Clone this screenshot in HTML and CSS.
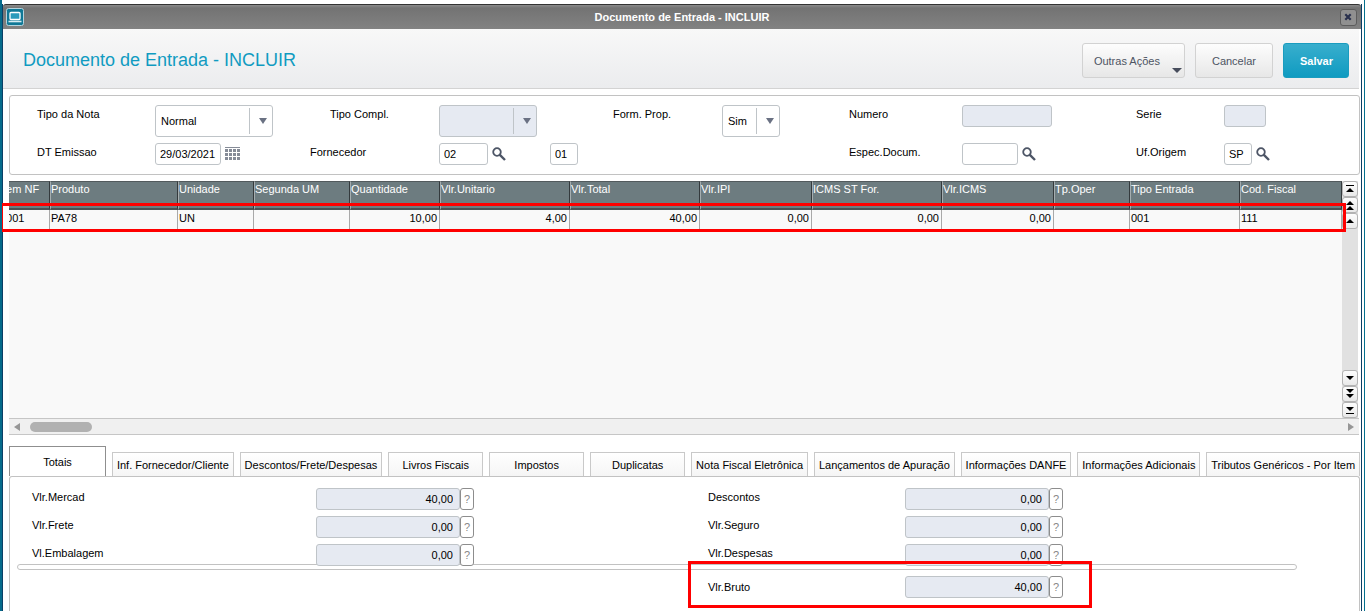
FILE: index.html
```html
<!DOCTYPE html>
<html lang="pt-BR">
<head>
<meta charset="UTF-8" />
<title>Documento de Entrada - INCLUIR</title>
    <link rel="stylesheet" href="styles.css">
</head>
<body>

<svg width="0" height="0" class="symbols">
    <symbol id="lupa" viewBox="0 0 14 14">
        <circle cx="5" cy="5" r="3.8" fill="none" stroke="#4d5566" stroke-width="1.8" />
        <path d="M7.6 7.6L13 13" stroke="#4d5566" stroke-width="2.4" />
    </symbol>
</svg>

<div class="window">
    <div class="titlebar">
        <svg class="app-icon" width="18" height="18" viewBox="0 0 18 18">
            <rect x=".5" y=".5" width="17" height="17" rx="2" fill="#107896" stroke="#b5d4de" />
            <rect x="4" y="4.5" width="10" height="7" rx="1" fill="#2c9bbb" stroke="#fff" stroke-width="1.3" />
            <path d="M2.500 13.500h13" stroke="#d9edf3" stroke-width="1.6" />
        </svg>
        <span class="titlebar-text">Documento de Entrada - INCLUIR</span>
        <button class="close" aria-label="Fechar">
            <svg width="8" height="8" viewBox="0 0 8 8"><path d="M1.300 1.300L6.700 6.700M6.700 1.300L1.300 6.700" stroke="#29304d" stroke-width="2.2" /></svg>
        </button>
    </div>

    <div class="header">
        <h1>Documento de Entrada - INCLUIR</h1>
        <div class="actions">
            <button class="btn btn-menu">Outras Ações</button>
            <button class="btn">Cancelar</button>
            <button class="btn btn-primary">Salvar</button>
        </div>
    </div>

    <div class="content">
        <form class="box">
            <label for="tipo">Tipo da Nota</label>
            <div class="select w-tipo"><select id="tipo"><option>Normal</option></select></div>
            <label for="compl" class="shift">Tipo Compl.</label>
            <div class="select disabled w-compl"><select id="compl" disabled><option></option></select></div>
            <label for="form">Form. Prop.</label>
            <div class="select w-form"><select id="form"><option>Sim</option></select></div>
            <label for="numero">Numero</label>
            <div><input id="numero" class="w-numero" type="text" disabled /></div>
            <label for="serie">Serie</label>
            <div><input id="serie" class="w-serie" type="text" disabled /></div>

            <label for="emissao">DT Emissao</label>
            <div class="group">
                <input id="emissao" class="w-data" type="text" value="29/03/2021" />
                <button type="button" class="icon" aria-label="Calendario">
                    <svg width="16" height="14" viewBox="0 0 16 14">
                        <path d="M0 .5h15" stroke="#858b97" />
                        <path d="M0 3.500h15M0 7.500h15M0 11.500h15" stroke="#858b97" stroke-width="3" stroke-dasharray="3 1" />
                    </svg>
                </button>
            </div>
            <label for="fornecedor">Fornecedor</label>
            <div class="group">
                <input id="fornecedor" class="w-forn" type="text" value="02" />
                <button type="button" class="icon" aria-label="Pesquisar fornecedor"><svg width="14" height="14"><use href="#lupa" /></svg></button>
                <input class="w-loja" type="text" value="01" aria-label="Loja" />
            </div>
            <span></span>
            <span></span>
            <label for="espec">Espec.Docum.</label>
            <div class="group">
                <input id="espec" class="w-espec" type="text" />
                <button type="button" class="icon" aria-label="Pesquisar especie"><svg width="14" height="14"><use href="#lupa" /></svg></button>
            </div>
            <label for="uf">Uf.Origem</label>
            <div class="group">
                <input id="uf" class="w-loja" type="text" value="SP" />
                <button type="button" class="icon" aria-label="Pesquisar UF"><svg width="14" height="14"><use href="#lupa" /></svg></button>
            </div>
        </form>

        <div class="grid">
            <div class="grid-view">
                <table>
                    <colgroup>
                        <col class="c-item" /><col class="c-prod" /><col class="c-uni" /><col class="c-seg" />
                        <col class="c-qtd" /><col class="c-valor" /><col class="c-valor" /><col class="c-imp" />
                        <col class="c-valor" /><col class="c-imp" /><col class="c-uni" /><col class="c-tes" /><col class="c-cfop" />
                    </colgroup>
                    <thead>
                        <tr>
                        <th>Item NF</th>
                        <th>Produto</th>
                        <th>Unidade</th>
                        <th>Segunda UM</th>
                        <th>Quantidade</th>
                        <th>Vlr.Unitario</th>
                        <th>Vlr.Total</th>
                        <th>Vlr.IPI</th>
                        <th>ICMS ST For.</th>
                        <th>Vlr.ICMS</th>
                        <th>Tp.Oper</th>
                        <th>Tipo Entrada</th>
                        <th>Cod. Fiscal</th>
                        </tr>
                    </thead>
                    <tbody>
                        <tr>
                        <td>0001</td>
                        <td>PA78</td>
                        <td>UN</td>
                        <td></td>
                        <td class="num">10,00</td>
                        <td class="num">4,00</td>
                        <td class="num">40,00</td>
                        <td class="num">0,00</td>
                        <td class="num">0,00</td>
                        <td class="num">0,00</td>
                        <td></td>
                        <td>001</td>
                        <td>111</td>
                        </tr>
                    </tbody>
                </table>
            </div>
            <div class="vscroll">
                <button aria-label="Inicio"><svg width="10" height="10" viewBox="0 0 10 10"><path d="M1 1h8v1H1zM1 8h8L5 4z" /></svg></button>
                <button aria-label="Pagina acima"><svg width="10" height="10" viewBox="0 0 10 10"><path d="M1 5h8L5 1zM1 10h8L5 6z" /></svg></button>
                <button aria-label="Acima"><svg width="10" height="10" viewBox="0 0 10 10"><path d="M1 7h8L5 3z" /></svg></button>
                <div class="track"></div>
                <button aria-label="Abaixo"><svg width="10" height="10" viewBox="0 0 10 10"><path d="M1 3h8L5 7z" /></svg></button>
                <button aria-label="Pagina abaixo"><svg width="10" height="10" viewBox="0 0 10 10"><path d="M1 0h8L5 4zM1 5h8L5 9z" /></svg></button>
                <button aria-label="Fim"><svg width="10" height="10" viewBox="0 0 10 10"><path d="M1 2h8L5 6zM1 8h8v1H1z" /></svg></button>
            </div>
            <div class="mark mark-row"></div>
        </div>
        <div class="hscroll">
            <button aria-label="Esquerda"><svg width="6" height="8" viewBox="0 0 6 8"><path d="M6 0v8L0 4z" fill="#969696" /></svg></button>
            <div class="thumb"></div>
            <button aria-label="Direita"><svg width="6" height="8" viewBox="0 0 6 8"><path d="M0 0v8L6 4z" fill="#969696" /></svg></button>
        </div>

        <div class="tabs" role="tablist">
            <button class="tab active" role="tab" aria-selected="true">Totais</button>
            <button class="tab" role="tab">Inf. Fornecedor/Cliente</button>
            <button class="tab" role="tab">Descontos/Frete/Despesas</button>
            <button class="tab" role="tab">Livros Fiscais</button>
            <button class="tab" role="tab">Impostos</button>
            <button class="tab" role="tab">Duplicatas</button>
            <button class="tab" role="tab">Nota Fiscal Eletrônica</button>
            <button class="tab" role="tab">Lançamentos de Apuração</button>
            <button class="tab" role="tab">Informações DANFE</button>
            <button class="tab" role="tab">Informações Adicionais</button>
            <button class="tab" role="tab">Tributos Genéricos - Por Item</button>
        </div>

        <div class="panel">
            <div class="totals">
                <label for="mercad">Vlr.Mercad</label>
                <div class="total"><input id="mercad" type="text" value="40,00" disabled /><button class="help">?</button></div>
                <label for="descontos">Descontos</label>
                <div class="total"><input id="descontos" type="text" value="0,00" disabled /><button class="help">?</button></div>

                <label for="frete">Vlr.Frete</label>
                <div class="total"><input id="frete" type="text" value="0,00" disabled /><button class="help">?</button></div>
                <label for="seguro">Vlr.Seguro</label>
                <div class="total"><input id="seguro" type="text" value="0,00" disabled /><button class="help">?</button></div>

                <label for="embalagem">Vl.Embalagem</label>
                <div class="total"><input id="embalagem" type="text" value="0,00" disabled /><button class="help">?</button></div>
                <label for="despesas">Vlr.Despesas</label>
                <div class="total"><input id="despesas" type="text" value="0,00" disabled /><button class="help">?</button></div>
            </div>
            <div class="divider"></div>
            <div class="totals">
                <span></span>
                <span></span>
                <label for="bruto" class="marked">Vlr.Bruto<span class="mark mark-bruto"></span></label>
                <div class="total"><input id="bruto" type="text" value="40,00" disabled /><button class="help">?</button></div>
            </div>
        </div>
    </div>
</div>

</body>
</html>
```
FILE: styles.css
```css
* {
  box-sizing: border-box;
}
body {
  margin: 0;
  min-height: 100vh;
  display: flex;
  background: #fff;
  border-left: 2px solid #056b8b;
  border-right: 1px solid #05718f;
  font: 11px "Liberation Sans", Arial, sans-serif;
  color: #000;
  overflow: hidden;
}
button, input, select {
  font: inherit;
  color: inherit;
  margin: 0;
}
button {
  padding: 0;
}
svg {
  display: block;
}
.symbols {
  position: absolute;
}
.window {
  flex: 1;
  min-width: 0;
  display: flex;
  flex-direction: column;
  margin: 4px 2px 0 0;
  border-left: 1px solid #0b3f66;
  border-right: 1px solid #0b3f66;
}

/* title bar */
.titlebar {
  display: flex;
  align-items: center;
  justify-content: space-between;
  height: 25px;
  padding: 0 4px 0 3px;
  border-top: 1px solid #333;
  border-radius: 3px 3px 0 0;
  background: linear-gradient(#8b8b8b, #737373 3px, #828282);
}
.titlebar-text {
  color: #fff;
  font-weight: bold;
}
.close {
  display: flex;
  align-items: center;
  justify-content: center;
  width: 17px;
  height: 17px;
  border: 1px solid #5c5c5c;
  border-radius: 3px;
  background: #909090;
}

/* header */
.header {
  display: flex;
  align-items: center;
  justify-content: space-between;
  height: 60px;
  margin-right: 2px;
  padding: 4px 10px 0 20px;
  border-bottom: 1px solid #d3d3d3;
  background: linear-gradient(#f8f8f8, #ebecee);
}
h1 {
  margin: 0;
  font-size: 18px;
  font-weight: normal;
  color: #109bc1;
}
.actions {
  display: flex;
  gap: 10px;
}
.btn {
  position: relative;
  height: 35px;
  padding: 0 16px;
  border: 1px solid #d2d2d2;
  border-radius: 3px;
  background: linear-gradient(#fdfdfd, #e7e7e7);
  color: #4d5463;
}
.btn-menu {
  padding: 0 24px 0 11px;
}
.btn-menu::after {
  content: "";
  position: absolute;
  right: 2px;
  bottom: 4px;
  border: 5px solid transparent;
  border-top-color: #474d5c;
  border-bottom: 0;
}
.btn-primary {
  padding: 0 15px 0 16px;
  border-color: #1a9cbf;
  background: linear-gradient(#38aecd, #0f9bc1);
  color: #fff;
  font-weight: bold;
}

.content {
  flex: 1;
  display: flex;
  flex-direction: column;
  padding: 6px 1px 0 6px;
}

/* form fields */
.box {
  display: grid;
  grid-template-columns: 118fr 155fr 129fr 174fr 109fr 127fr 113fr 174fr 88fr 135fr;
  grid-template-rows: 38px 38px;
  align-items: start;
  height: 80px;
  padding: 9px 0 0 27px;
  border: 1px solid #c2c2c2;
  border-radius: 3px;
}
.box > * {
  min-width: 0;
}
label {
  line-height: 18px;
  white-space: nowrap;
}
.shift {
  padding-left: 20px;
}
input {
  height: 22px;
  padding: 0 4px;
  border: 1px solid #bfc4c8;
  border-radius: 3px;
  background: #fff;
}
input:disabled {
  background: #e6eaf2;
  color: #000;
}
.box input {
  display: block;
}
.select {
  position: relative;
  height: 32px;
}
.select select {
  appearance: none;
  width: 100%;
  height: 32px;
  padding: 0 28px 0 5px;
  border: 1px solid #bfc4c8;
  border-radius: 3px;
  background: #fff;
}
.select.disabled select {
  background: #e6eaf2;
  opacity: 1;
}
.select::before {
  content: "";
  position: absolute;
  top: 3px;
  bottom: 3px;
  right: 23px;
  border-left: 1px solid #bfc4c8;
}
.select::after {
  content: "";
  position: absolute;
  top: 13px;
  right: 6px;
  border: 4px solid transparent;
  border-top: 6px solid #6a7183;
  border-bottom: 0;
}
.group {
  display: flex;
  align-items: center;
}
.icon {
  margin-left: 4px;
  border: 0;
  background: none;
}
.icon + input {
  margin-left: 44px;
}
.w-tipo { width: 118px; }
.w-compl { width: 98px; }
.w-form { width: 58px; }
.w-numero { width: 90px; }
.w-serie { width: 42px; }
.w-data { width: 66px; }
.w-forn { width: 49px; }
.w-loja { width: 28px; }
.w-espec { width: 56px; }

/* items grid */
.grid {
  position: relative;
  display: flex;
  height: 237px;
  margin: 6px 2px 0 0;
}
.grid-view {
  flex: 1;
  min-width: 0;
  overflow: hidden;
  background: #f9f9f9;
}
/* scrolled a little to the right, so the first column is cut */
table {
  table-layout: fixed;
  width: calc(100% + 10px);
  margin-left: -10px;
  border-collapse: separate;
  border-spacing: 0;
}
th, td {
  padding: 0 2px 0 0;
  font-weight: normal;
  text-align: left;
  vertical-align: top;
  line-height: 16px;
  white-space: nowrap;
  overflow: hidden;
}
th {
  height: 29px;
  border-left: 1px solid #a5adaf;
  border-right: 1px solid #343a3d;
  border-top: 1px solid #525a5d;
  border-bottom: 2px solid #4a5254;
  background: #6d7c80;
  color: #fff;
  line-height: 14px;
}
td {
  height: 20px;
  border-right: 1px solid #a9a9a9;
  padding-left: 1px;
}
.num {
  text-align: right;
}
.c-item { width: 51px; }
.c-prod { width: 128px; }
.c-uni { width: 76px; }
.c-seg { width: 96px; }
.c-qtd { width: 90px; }
.c-valor { width: 130px; }
.c-imp { width: 112px; }
.c-tes { width: 110px; }
.c-cfop { width: 102px; }

.vscroll {
  display: flex;
  flex-direction: column;
  width: 16px;
  background: #e1e1e1;
}
.vscroll button {
  display: flex;
  align-items: center;
  justify-content: center;
  height: 16px;
  border: 1px solid #b3b3b3;
  border-radius: 3px;
  background: linear-gradient(#fdfdfd, #e9e9e9);
}
.track {
  flex: 1;
}
.hscroll {
  display: flex;
  align-items: center;
  height: 17px;
  margin-right: 1px;
  padding: 0 5px;
  border-top: 1px solid #c6c6c6;
  border-bottom: 1px solid #c6c6c6;
  background: #f0f0f0;
}
.hscroll button {
  border: 0;
  background: none;
}
.thumb {
  width: 62px;
  height: 10px;
  margin: 0 auto 0 10px;
  border-radius: 5px;
  background: #b1b1b1;
}

/* red highlights lie over the fields */
.mark {
  position: absolute;
  z-index: 2;
  border: 3px solid #f00;
  pointer-events: none;
}
.mark-row {
  top: 22px;
  left: -9px;
  right: 12px;
  height: 29px;
}
.marked {
  position: relative;
  line-height: 22px;
}
.mark-bruto {
  top: -15px;
  left: -20px;
  width: 404px;
  height: 47px;
}

/* tabs */
.tabs {
  display: flex;
  align-items: flex-end;
  gap: 6px;
  margin-top: 11px;
}
.tab {
  flex: 1 0 auto;
  min-width: 95px;
  height: 24px;
  padding: 0 3px;
  border: 1px solid #c9c9c9;
  border-bottom: 0;
  background: linear-gradient(#fff, #f5f5f5);
  white-space: nowrap;
}
.tab.active {
  height: 30px;
  min-width: 97px;
  border-color: #8f8f8f;
  background: #fff;
}
.panel {
  flex: 1;
  padding-top: 11px;
  border: 1px solid #c2c2c2;
  border-bottom: 0;
  border-radius: 3px 3px 0 0;
}
.totals {
  display: grid;
  grid-template-columns: 284fr 392fr 197fr 454fr;
  row-gap: 6px;
  padding-left: 22px;
}
.total {
  position: relative;
  z-index: 1;
  display: flex;
}
.total input {
  width: 144px;
  padding-right: 6px;
  text-align: right;
}
.help {
  width: 14px;
  height: 22px;
  border: 1px solid #8d8d8d;
  border-radius: 3px;
  background: #fff;
  color: #888;
}
.divider {
  height: 6px;
  margin: -2px 62px 6px 7px;
  border: 1px solid #c2c2c2;
  border-radius: 3px;
}
```
